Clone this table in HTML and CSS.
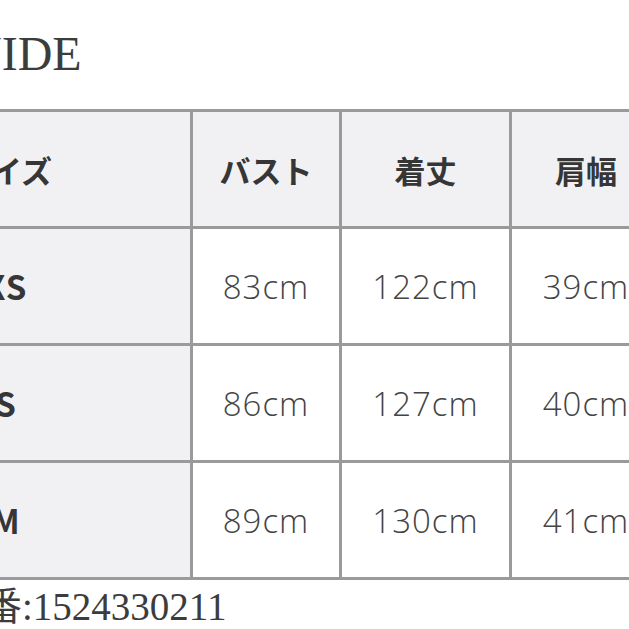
FILE: index.html
```html
<!DOCTYPE html>
<html lang="ja">
<head>
<meta charset="utf-8">
<link rel="stylesheet" href="styles.css">
</head>
<body>
<div class="page">
  <h1 class="title">SIZE GUIDE</h1>
  <div class="grid">
    <div class="cell head">サイズ</div>
    <div class="cell head">バスト</div>
    <div class="cell head">着丈</div>
    <div class="cell head">肩幅</div>

    <div class="cell label">XS</div>
    <div class="cell val">83cm</div>
    <div class="cell val">122cm</div>
    <div class="cell val">39cm</div>

    <div class="cell label">S</div>
    <div class="cell val">86cm</div>
    <div class="cell val">127cm</div>
    <div class="cell val">40cm</div>

    <div class="cell label">M</div>
    <div class="cell val">89cm</div>
    <div class="cell val">130cm</div>
    <div class="cell val">41cm</div>
  </div>
  <p class="note">品番:1524330211</p>
</div>
</body>
</html>
```

FILE: styles.css
```css
html, body {
  margin: 0;
  padding: 0;
  background: #ffffff;
  overflow: hidden;
}

.page {
  margin-left: -181px;
  width: 900px;
  padding-top: 30px;
}

.title {
  margin: 0;
  font-family: "Liberation Serif", serif;
  font-weight: 400;
  font-size: 48px;
  line-height: 48px;
  color: #3c3c3c;
  white-space: nowrap;
}

.grid {
  margin-top: 31px;
  display: grid;
  grid-template-columns: 368px 146px 167px 148px;
  grid-auto-rows: 114px;
  gap: 3px;
  padding: 3px;
  background: #9a9a9a;
  width: max-content;
}

.cell {
  display: flex;
  align-items: center;
  justify-content: center;
  background: #ffffff;
  white-space: nowrap;
}

.head,
.label {
  background: #f1f1f3;
  font-family: "Noto Sans CJK JP", "Noto Sans", sans-serif;
  font-weight: 700;
  color: #363636;
}

.head {
  font-size: 31px;
}

.label {
  font-size: 33px;
  letter-spacing: 1px;
}

.val {
  font-family: "Open Sans", "Noto Sans", sans-serif;
  font-weight: 300;
  font-size: 33px;
  letter-spacing: 1px;
  color: #444444;
}

.note {
  margin: 7px 0 0 0;
  padding-left: 125px;
  font-family: "Liberation Serif", "Noto Sans CJK JP", serif;
  font-size: 39px;
  line-height: 40px;
  color: #3c3c3c;
  white-space: nowrap;
}
```
